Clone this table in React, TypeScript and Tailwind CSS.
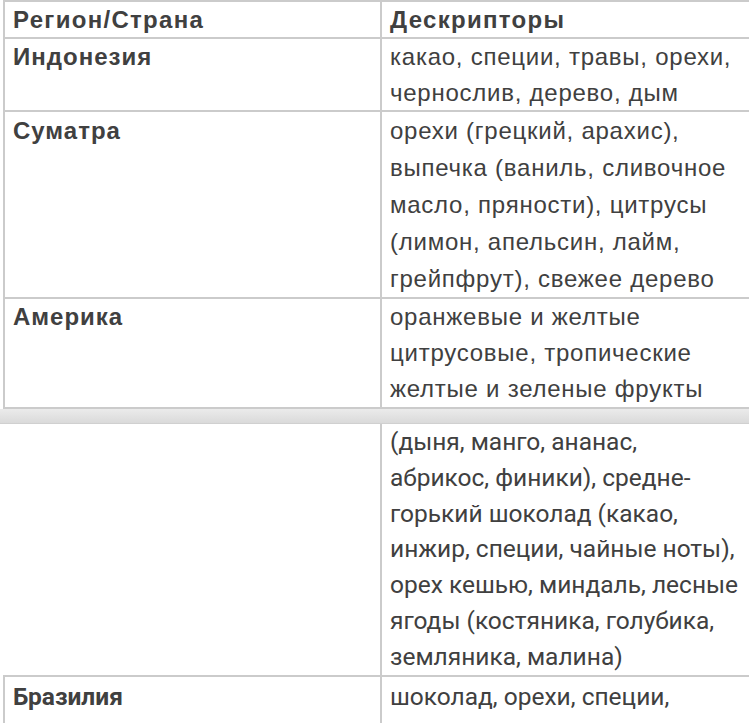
const topRows = [
  {
    region: "Индонезия",
    leading: "leading-[35.5px]",
    lines: ["какао, специи, травы, орехи,", "чернослив, дерево, дым"],
  },
  {
    region: "Суматра",
    leading: "leading-[37px]",
    lines: [
      "орехи (грецкий, арахис),",
      "выпечка (ваниль, сливочное",
      "масло, пряности), цитрусы",
      "(лимон, апельсин, лайм,",
      "грейпфрут), свежее дерево",
    ],
  },
  {
    region: "Америка",
    leading: "leading-[36px]",
    lines: [
      "оранжевые и желтые",
      "цитрусовые, тропические",
      "желтые и зеленые фрукты",
    ],
  },
];

const bottomLines = [
  "(дыня, манго, ананас,",
  "абрикос, финики), средне-",
  "горький шоколад (какао,",
  "инжир, специи, чайные ноты),",
  "орех кешью, миндаль, лесные",
  "ягоды (костяника, голубика,",
  "земляника, малина)",
];

export default function App() {
  return (
    <div className="w-[749px] h-[723px] overflow-hidden bg-white text-[#404040]">
      {/* first page of the table */}
      <div className="ml-[3px] border-l-2 border-t-2 border-[#cbcbcb] font-['Liberation_Sans',sans-serif] text-[24px] tracking-[0.75px]">
        <div className="grid grid-cols-[377px_1fr] border-b-2 border-[#cbcbcb] leading-[35px] font-bold tracking-[1.3px]">
          <div className="border-r-2 border-[#cbcbcb] pl-[8px]">Регион/Страна</div>
          <div className="pl-[8px]">Дескрипторы</div>
        </div>
        {topRows.map((row) => (
          <div
            key={row.region}
            className={`grid grid-cols-[377px_1fr] border-b-2 border-[#cbcbcb] ${row.leading}`}
          >
            <div className="border-r-2 border-[#cbcbcb] pl-[8px] font-bold tracking-[1px]">
              {row.region}
            </div>
            <div className="pl-[8px]">
              {row.lines.map((l) => (
                <div key={l}>{l}</div>
              ))}
            </div>
          </div>
        ))}
      </div>

      {/* page break */}
      <div className="h-[15px] bg-gradient-to-b from-[#ebebeb] to-[#dadada] border-b border-[#d0d0d0]" />

      {/* second page */}
      <div className="font-['Roboto',sans-serif] text-[24.5px]">
        <div className="ml-[3px] grid grid-cols-[379px_1fr] border-b-2 border-[#cbcbcb] leading-[35.8px]">
          <div className="border-r-2 border-[#cbcbcb]" />
          <div className="pl-[8px]">
            {bottomLines.map((l) => (
              <div key={l}>{l}</div>
            ))}
          </div>
        </div>
        <div className="ml-[3px] grid grid-cols-[377px_1fr] border-l-2 border-[#cbcbcb] leading-[36px]">
          <div className="border-r-2 border-[#cbcbcb] pl-[8px] pt-[2px] font-bold">Бразилия</div>
          <div className="pl-[8px] pt-[2px]">
            <div>шоколад, орехи, специи,</div>
            <div>фрукты, карамель, ваниль</div>
          </div>
        </div>
      </div>
    </div>
  );
}
